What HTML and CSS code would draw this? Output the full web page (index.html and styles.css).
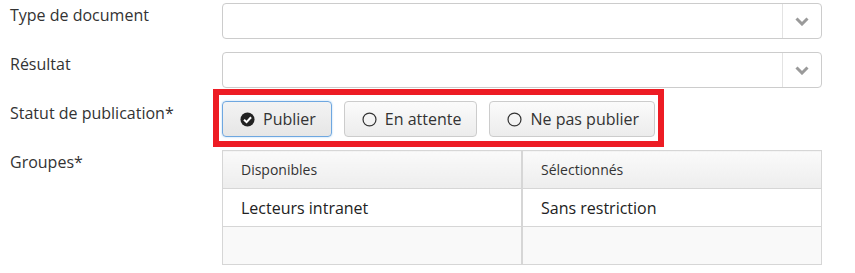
FILE: index.html
```html
<!DOCTYPE html>
<html lang="fr">

<head>
    <meta charset="UTF-8" />
    <meta name="viewport" content="width=device-width, initial-scale=1.0" />
    <title>Document</title>

    <link rel="stylesheet" href="styles.css">
</head>

<body>
    <form class="doc-form">
        <div class="row">
            <label class="row-label">Type de document</label>
            <div class="select">
                <span class="select-value"></span>
                <span class="select-arrow">
                    <svg width="14" height="9" viewBox="0 0 14 9"><path d="M1.5 1.5 L7 7 L12.5 1.5" fill="none" stroke="#9a9a9a" stroke-width="3"/></svg>
                </span>
            </div>
        </div>

        <div class="row">
            <label class="row-label">Résultat</label>
            <div class="select">
                <span class="select-value"></span>
                <span class="select-arrow">
                    <svg width="14" height="9" viewBox="0 0 14 9"><path d="M1.5 1.5 L7 7 L12.5 1.5" fill="none" stroke="#9a9a9a" stroke-width="3"/></svg>
                </span>
            </div>
        </div>

        <div class="row">
            <label class="row-label">Statut de publication*</label>
            <div class="highlight">
                <div class="btn-group">
                    <button type="button" class="btn active">
                        <svg width="15" height="15" viewBox="0 0 16 16"><circle cx="8" cy="8" r="7.5" fill="#222"/><path d="M4.3 8.2 L7 10.8 L11.8 5.6" fill="none" stroke="#fff" stroke-width="2.2"/></svg>
                        Publier
                    </button>
                    <button type="button" class="btn">
                        <svg width="15" height="15" viewBox="0 0 16 16"><circle cx="8" cy="8" r="6.9" fill="none" stroke="#333" stroke-width="1.3"/></svg>
                        En attente
                    </button>
                    <button type="button" class="btn">
                        <svg width="15" height="15" viewBox="0 0 16 16"><circle cx="8" cy="8" r="6.9" fill="none" stroke="#333" stroke-width="1.3"/></svg>
                        Ne pas publier
                    </button>
                </div>
            </div>
        </div>

        <div class="row">
            <label class="row-label">Groupes*</label>
            <table class="groups">
                <thead>
                    <tr>
                        <th>Disponibles</th>
                        <th>Sélectionnés</th>
                    </tr>
                </thead>
                <tbody>
                    <tr>
                        <td>Lecteurs intranet</td>
                        <td>Sans restriction</td>
                    </tr>
                    <tr class="odd">
                        <td></td>
                        <td></td>
                    </tr>
                </tbody>
            </table>
        </div>
    </form>
</body>

</html>
```

FILE: styles.css
```css
body {
    margin: 0;
    background-color: #fff;
    font-family: "Open Sans", "Liberation Sans", sans-serif;
    font-size: 16px;
    color: #333;
}

.doc-form {
    display: flex;
    flex-direction: column;
    gap: 13px;
    padding: 3px 0 0 10px;
}

.row {
    display: grid;
    grid-template-columns: 212px 600px;
    align-items: start;
}

.row-label {
    padding-top: 1px;
    line-height: 22px;
}

.select {
    display: flex;
    height: 36px;
    box-sizing: border-box;
    border: 1px solid #ccc;
    border-radius: 4px;
    background: #fff;
}

.select-value {
    flex: 1;
}

.select-arrow {
    width: 38px;
    border-left: 1px solid #e3e3e3;
    display: flex;
    align-items: center;
    justify-content: center;
}

.highlight {
    justify-self: start;
    margin: -12px 0 -10px -9px;
    padding: 6px 3px 4px 3px;
    border: 6px solid #ed1c24;
}

.btn-group {
    display: flex;
    gap: 12px;
}

.btn {
    display: flex;
    align-items: center;
    gap: 8px;
    height: 36px;
    box-sizing: border-box;
    padding: 0 15px 0 17px;
    border: 1px solid #ccc;
    border-radius: 4px;
    background: linear-gradient(#fbfbfb, #ececec);
    font-family: inherit;
    font-size: 16px;
    color: #333;
}

.btn.active {
    border-color: #6ea7e0;
    background: linear-gradient(#f3f3f3, #e6e6e6);
    box-shadow: 0 0 2px rgba(102, 175, 233, 0.6);
}

.groups {
    width: 600px;
    border-collapse: collapse;
    border: 1px solid #d6d6d6;
}

.groups th,
.groups td {
    width: 50%;
    height: 37px;
    padding: 0 18px;
    text-align: left;
    border: 1px solid #d6d6d6;
}

.groups th + th,
.groups td + td {
    border-left-width: 2px;
}

.groups th {
    font-size: 14px;
    font-weight: normal;
    background: linear-gradient(#fafafa, #ededed);
}

.groups td {
    font-size: 16px;
    color: #222;
}

.groups tr.odd td {
    background: #f9f9f9;
}
```
